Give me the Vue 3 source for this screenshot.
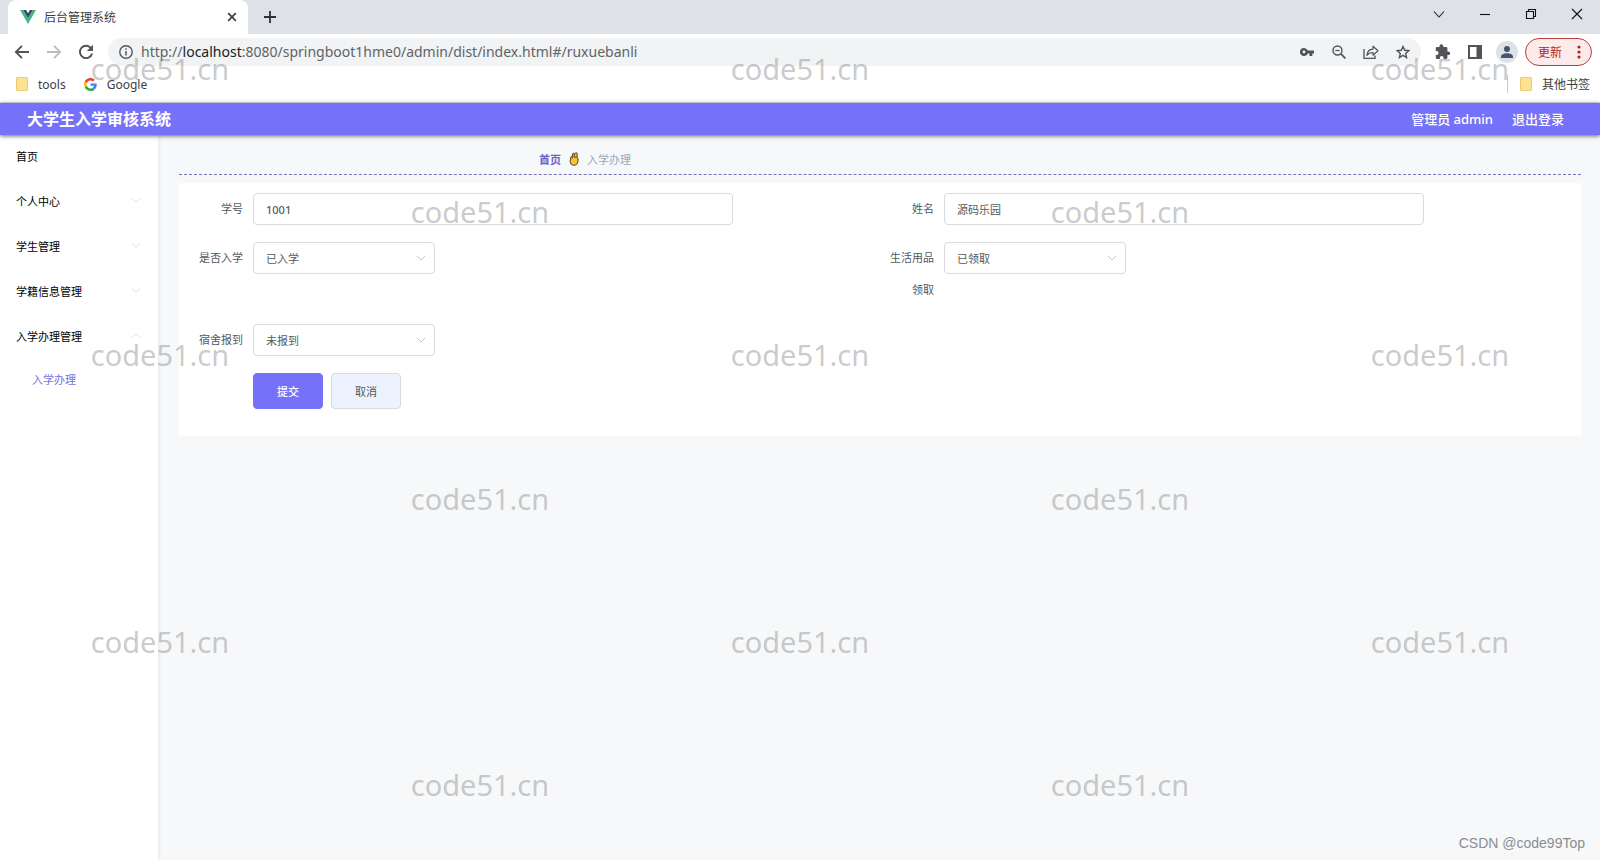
<script setup>
import { ref } from 'vue'

const menu = [
  { label: '首页' },
  { label: '个人中心', open: false },
  { label: '学生管理', open: false },
  { label: '学籍信息管理', open: false },
  { label: '入学办理管理', open: true },
]

const studentNo = ref('1001')
const studentName = ref('源码乐园')
const enrolled = ref('已入学')
const supplies = ref('已领取')
const dorm = ref('未报到')

const stampCells = Array.from({ length: 30 }, (_, i) => i % 2 === 0)
</script>

<template>
  <div class="window">
    <div class="tabstrip">
      <div class="tab">
        <svg class="vue-logo" viewBox="0 0 16 14" width="16" height="14">
          <path d="M0 0h3.2L8 8.3 12.8 0H16L8 13.9z" fill="#41b883" />
          <path d="M3.2 0h2.9L8 3.3 9.9 0h2.9L8 8.3z" fill="#35495e" />
        </svg>
        <span class="tab-title">后台管理系统</span>
        <button class="icon-btn close-tab" aria-label="关闭标签页">
          <svg viewBox="0 0 10 10" width="10" height="10"><path d="M1.2 1.2l7.6 7.6M8.8 1.2L1.2 8.8" stroke="#3c4043" stroke-width="1.7" /></svg>
        </button>
      </div>
      <button class="icon-btn new-tab" aria-label="新标签页">
        <svg viewBox="0 0 12 12" width="12" height="12"><path d="M6 0v12M0 6h12" stroke="#303134" stroke-width="1.8" /></svg>
      </button>
      <div class="window-controls">
        <button class="icon-btn" aria-label="搜索标签页"><svg viewBox="0 0 12 12" width="12" height="12"><path d="M1 3.5l5 5.5 5-5.5" fill="none" stroke="#222" stroke-width="1.1" /></svg></button>
        <button class="icon-btn" aria-label="最小化"><svg viewBox="0 0 12 12" width="12" height="12"><path d="M1 6.5h10" stroke="#111" stroke-width="1.1" /></svg></button>
        <button class="icon-btn" aria-label="还原"><svg viewBox="0 0 12 12" width="12" height="12"><path d="M1.5 3.5h7v7h-7zM3.5 3.500V1.500h7v7h-2" fill="none" stroke="#111" stroke-width="1.1" /></svg></button>
        <button class="icon-btn" aria-label="关闭"><svg viewBox="0 0 12 12" width="12" height="12"><path d="M1 1l10 10M11 1L1 11" stroke="#111" stroke-width="1.1" /></svg></button>
      </div>
    </div>

    <div class="toolbar">
      <button class="icon-btn" aria-label="后退"><svg viewBox="0 0 16 16" width="16" height="16"><path d="M15 8H2M8 1.800L1.800 8 8 14.200" fill="none" stroke="#505357" stroke-width="1.800" /></svg></button>
      <button class="icon-btn" aria-label="前进"><svg viewBox="0 0 16 16" width="16" height="16"><path d="M1 8h13M8 1.800L14.200 8 8 14.200" fill="none" stroke="#babcbe" stroke-width="1.800" /></svg></button>
      <button class="icon-btn reload" aria-label="重新加载"><svg viewBox="0 0 16 16" width="16" height="16"><path d="M13.300 4.500A6.200 6.200 0 1 0 14.100 9.500" fill="none" stroke="#505357" stroke-width="1.900" /><path d="M15 0.800v6.200H8.800z" fill="#505357" /></svg></button>
      <div class="omnibox">
        <svg class="info" viewBox="0 0 14 14" width="14" height="14"><circle cx="7" cy="7" r="6.200" fill="none" stroke="#55585c" stroke-width="1.400" /><path d="M7 6v4.500M7 3.200v1.600" stroke="#55585c" stroke-width="1.500" /></svg>
        <span class="url">http://<b>localhost</b>:8080/springboot1hme0/admin/dist/index.html#/ruxuebanli</span>
        <button class="icon-btn" aria-label="密码"><svg viewBox="0 0 14 14" width="14" height="14"><path fill-rule="evenodd" d="M4 3a4 4 0 1 0 3.700 5.400H9.500V11h2.800V8.400H14V5.600H7.700A4 4 0 0 0 4 3zm0 2.600a1.400 1.400 0 1 1 0 2.800 1.400 1.400 0 0 1 0-2.800z" fill="#505357" /></svg></button>
        <button class="icon-btn" aria-label="缩放"><svg viewBox="0 0 14 14" width="14" height="14"><circle cx="5.500" cy="5.500" r="4.500" fill="none" stroke="#505357" stroke-width="1.400" /><path d="M8.900 8.900l4.500 4.500" stroke="#505357" stroke-width="1.800" /><path d="M3.300 5.500h4.400" stroke="#505357" stroke-width="1.200" /></svg></button>
        <button class="icon-btn" aria-label="分享"><svg viewBox="0 0 16 14" width="16" height="14"><path d="M1 4v9.300h11V10.500" fill="none" stroke="#505357" stroke-width="1.300" /><path d="M3.800 10.300C4.400 6 6.700 4.300 10 4.100V1.200l5 4.500-5 4.500V7.500C7.300 7.500 5.300 8.300 3.800 10.300z" fill="none" stroke="#505357" stroke-width="1.200" stroke-linejoin="round" /></svg></button>
        <button class="icon-btn" aria-label="收藏"><svg viewBox="0 0 14 14" width="14" height="14"><path d="M7 1.500l1.700 3.800 4.100.4-3.100 2.700.9 4.100L7 10.400l-3.600 2.100.9-4.100L1.200 5.700l4.100-.4z" fill="none" stroke="#505357" stroke-width="1.400" /></svg></button>
      </div>
      <button class="icon-btn ext" aria-label="扩展程序"><svg viewBox="0 0 16 16" width="16" height="16"><path d="M13.300 7.400h-.9V4.300c0-.7-.6-1.300-1.300-1.300H8.300V2.200a1.900 1.900 0 0 0-3.800 0V3H2.100C1.400 3 .8 3.600.8 4.300v2.600h.8a2 2 0 0 1 0 4H.8v2.700c0 .7.600 1.300 1.300 1.300h2.700V14a1.900 1.900 0 0 1 3.800 0v.9h2.500c.7 0 1.300-.6 1.300-1.300v-2.500h.9a1.850 1.850 0 0 0 0-3.700z" fill="#505357" /></svg></button>
      <button class="icon-btn side" aria-label="侧边栏"><svg viewBox="0 0 14 14" width="14" height="14"><path fill-rule="evenodd" d="M0 0h14v14H0zM2 2v10h6.500V2z" fill="#505357" /></svg></button>
      <button class="icon-btn avatar" aria-label="用户"><svg viewBox="0 0 14 14" width="14" height="14"><circle cx="7" cy="4" r="3" fill="#44546b" /><path d="M1 13v-1.500C1 9.400 4.500 8.200 7 8.200s6 1.200 6 3.300V13z" fill="#44546b" /></svg></button>
      <button class="update">更新<svg viewBox="0 0 4 14" width="4" height="14"><circle cx="2" cy="2" r="1.600" fill="#b3261e" /><circle cx="2" cy="7" r="1.600" fill="#b3261e" /><circle cx="2" cy="12" r="1.600" fill="#b3261e" /></svg></button>
    </div>

    <div class="bookmarks">
      <a href="#tools" class="bookmark"><i class="folder"></i>tools</a>
      <a href="#google" class="bookmark">
        <svg viewBox="0 0 48 48" width="13" height="13"><path fill="#ea4335" d="M24 9.500c3.500 0 6.700 1.200 9.200 3.600l6.900-6.900C35.900 2.400 30.500 0 24 0 14.600 0 6.500 5.400 2.600 13.200l8 6.200C12.400 13.700 17.700 9.500 24 9.500z" /><path fill="#4285f4" d="M47 24.500c0-1.600-.2-3.100-.4-4.500H24v9h12.900c-.6 3-2.200 5.500-4.800 7.200l7.700 6C44.400 38 47 31.800 47 24.500z" /><path fill="#fbbc05" d="M10.500 28.600a14.500 14.500 0 0 1 0-9.200l-8-6.200a24 24 0 0 0 0 21.600z" /><path fill="#34a853" d="M24 48c6.500 0 11.900-2.100 15.900-5.800l-7.700-6c-2.200 1.500-4.900 2.300-8.200 2.300-6.300 0-11.600-4.200-13.500-9.900l-8 6.200C6.500 42.600 14.600 48 24 48z" /></svg>
        Google
      </a>
      <a href="#other" class="bookmark other"><i class="folder"></i>其他书签</a>
    </div>

    <header class="app-header">
      <h1>大学生入学审核系统</h1>
      <span class="who">管理员 admin</span>
      <a href="#logout" class="logout">退出登录</a>
    </header>

    <div class="app-body">
      <nav class="sidebar">
        <button v-for="item in menu" :key="item.label" class="menu-item">
          {{ item.label }}
          <svg v-if="item.open !== undefined" viewBox="0 0 10 10" width="10" height="10">
            <path :d="item.open ? 'M1 6.500l4-4 4 4' : 'M1 2.500l4 4 4-4'" fill="none" stroke="#dcdde0" stroke-width="1" />
          </svg>
        </button>
        <a href="#/ruxuebanli" class="submenu-item">入学办理</a>
      </nav>

      <main class="content">
        <div class="breadcrumb">
          <a href="#/">首页</a>
          <svg viewBox="0 0 10 14" width="10" height="14">
            <path d="M1.500 6.500C1.300 5 2.300 4.300 3.200 4.700L3.600 2.200C3.800 1 5 .8 5.200 2L6.600 1C7.600.4 8.500 1.200 8.200 2.300L7.900 5C9 6 9.300 7.500 8.900 9.500 8.500 12 7 13.200 4.900 13.200 2.500 13.200 1.200 11.500 1.200 9.500z" fill="#f7c52d" stroke="#4b3820" stroke-width="1" />
            <path d="M5.200 2v3M3.200 4.700v2M5.100 5l2.500.3" fill="none" stroke="#3f2e14" stroke-width=".9" />
          </svg>
          <span>入学办理</span>
        </div>

        <form class="card" @submit.prevent>
          <div class="field">
            <label for="no">学号</label>
            <input id="no" v-model="studentNo" class="number" type="text" />
          </div>
          <div class="field">
            <label for="name">姓名</label>
            <input id="name" v-model="studentName" type="text" />
          </div>
          <div class="field">
            <label for="enrolled">是否入学</label>
            <div class="select">
              <select id="enrolled" v-model="enrolled"><option>已入学</option><option>未入学</option></select>
              <svg viewBox="0 0 10 10" width="10" height="10"><path d="M1 3l4 4 4-4" fill="none" stroke="#c0c4cc" /></svg>
            </div>
          </div>
          <div class="field">
            <label for="supplies">生活用品领取</label>
            <div class="select">
              <select id="supplies" v-model="supplies"><option>已领取</option><option>未领取</option></select>
              <svg viewBox="0 0 10 10" width="10" height="10"><path d="M1 3l4 4 4-4" fill="none" stroke="#c0c4cc" /></svg>
            </div>
          </div>
          <div class="field">
            <label for="dorm">宿舍报到</label>
            <div class="select">
              <select id="dorm" v-model="dorm"><option>未报到</option><option>已报到</option></select>
              <svg viewBox="0 0 10 10" width="10" height="10"><path d="M1 3l4 4 4-4" fill="none" stroke="#c0c4cc" /></svg>
            </div>
          </div>
          <div class="actions">
            <button type="submit" class="primary">提交</button>
            <button type="button">取消</button>
          </div>
        </form>
      </main>
    </div>

    <div class="stamps" aria-hidden="true">
      <span v-for="(shown, i) in stampCells" :key="i">{{ shown ? 'code51.cn' : '' }}</span>
    </div>
    <div class="credit">CSDN @code99Top</div>
  </div>
</template>

<style>
body {
  margin: 0;
}
</style>

<style scoped>
.window {
  position: relative;
  display: flex;
  flex-direction: column;
  min-height: 100vh;
  overflow: hidden;
  background: #fff;
  color: #3c4043;
  font-family: "Noto Sans", "Noto Sans CJK SC", sans-serif;
  font-size: 12px;
}
.window * {
  box-sizing: border-box;
}
button,
input,
select {
  font: inherit;
  color: inherit;
}
a {
  color: inherit;
  text-decoration: none;
}
svg {
  flex: none;
  display: block;
}
.icon-btn {
  display: flex;
  align-items: center;
  justify-content: center;
  flex: none;
  padding: 0;
  border: 0;
  background: none;
}

.tabstrip {
  display: flex;
  height: 34px;
  padding-left: 8px;
  background: #dee1e6;
}
.tab {
  display: flex;
  align-items: center;
  width: 240px;
  padding: 0 11px 0 12px;
  border-radius: 8px 8px 0 0;
  background: #fff;
}
.tab-title {
  flex: 1;
  margin-left: 8px;
}
.new-tab {
  width: 44px;
}
.window-controls {
  display: flex;
  align-items: center;
  height: 28px;
  margin-left: auto;
}
.window-controls .icon-btn {
  width: 46px;
  height: 28px;
}

.toolbar {
  display: flex;
  align-items: center;
  height: 36px;
  padding: 0 8px 0 14px;
}
.toolbar > .icon-btn {
  width: 16px;
  margin-right: 16px;
}
.toolbar > .reload {
  margin-right: 14px;
}
.omnibox {
  display: flex;
  flex: 1;
  align-items: center;
  gap: 16px;
  height: 28px;
  padding: 0 10px 0 11px;
  border-radius: 14px;
  background: #f1f3f4;
}
.omnibox .icon-btn {
  width: 16px;
}
.info {
  margin-right: -8px;
}
.url {
  flex: 1;
  color: #5f6368;
  font-size: 14px;
  line-height: 18px;
}
.url b {
  color: #202124;
  font-weight: 400;
}
.toolbar > .ext {
  margin: 0 16px 0 14px;
}
.toolbar > .avatar {
  width: 22px;
  height: 22px;
  margin-right: 7px;
  border-radius: 11px;
  background: #dee1e6;
}
.toolbar > .side {
  margin-right: 13px;
}
.update {
  display: flex;
  align-items: center;
  justify-content: space-between;
  width: 67px;
  height: 28px;
  padding: 0 10px 0 12px;
  border: 1px solid #b3403a;
  border-radius: 14px;
  background: #fcebea;
  color: #b3261e;
}

.bookmarks {
  display: flex;
  align-items: center;
  gap: 18px;
  height: 33px;
  padding: 0 10px 4px 16px;
  border-bottom: 1px solid #e4e3f5;
}
.bookmark {
  display: flex;
  align-items: center;
  gap: 10px;
}
.folder {
  width: 12px;
  height: 14px;
  border: 1px solid #e9cc6b;
  border-radius: 1px;
  background: #fde293;
}
.other {
  height: 18px;
  margin-left: auto;
  padding-left: 12px;
  border-left: 1px solid #c8cacd;
}

.app-header {
  position: relative;
  display: flex;
  align-items: center;
  height: 32px;
  padding: 0 36px 2px 27px;
  background: #7571f9;
  box-shadow: 0 1px 4px rgba(0, 0, 0, 0.6);
  color: #fff;
  font-size: 13px;
  font-weight: 500;
}
.app-header h1 {
  margin: 0;
  font-size: 16px;
  font-weight: 700;
}
.who {
  margin-left: auto;
}
.logout {
  margin-left: 19px;
}

.app-body {
  display: flex;
  flex: 1;
  font-size: 11px;
}
.sidebar {
  position: relative;
  width: 158px;
  background: #fff;
  box-shadow: 0 0 4px rgba(0, 0, 0, 0.12);
}
.app-header {
  z-index: 1;
}
.menu-item {
  display: flex;
  align-items: center;
  justify-content: space-between;
  width: 100%;
  height: 45px;
  padding: 0 17px 3px 16px;
  border: 0;
  background: none;
  color: #000;
}
.submenu-item {
  display: flex;
  align-items: center;
  height: 40px;
  padding: 0 0 3px 32px;
  color: #7571d9;
}
.content {
  flex: 1;
  padding: 0 19px 0 21px;
  background: #f6f8fa;
}
.breadcrumb {
  display: flex;
  align-items: center;
  gap: 8px;
  height: 40px;
  margin-bottom: 8px;
  padding: 8px 0 0 360px;
  border-bottom: 1px dashed #7772b5;
  color: #97a8be;
}
.breadcrumb a {
  color: #6f63cf;
  font-weight: 700;
}
.card {
  display: grid;
  grid-template-columns: 1fr 1fr;
  padding: 10px 10px 27px;
  background: #fff;
  color: #55585e;
}
.field {
  display: flex;
  align-items: flex-start;
  margin-bottom: 17px;
}
.field label {
  flex: none;
  width: 64px;
  padding-right: 10px;
  line-height: 32px;
  text-align: right;
}
.field:nth-child(4) {
  margin-bottom: 18px;
}
.field input,
.field select {
  width: 480px;
  height: 32px;
  padding: 0 12px;
  border: 1px solid #d9dbe0;
  border-radius: 4px;
  outline: 0;
  background: #fff;
}
.field .number {
  font-weight: 500;
}
.select {
  position: relative;
  width: 182px;
}
.field select {
  display: block;
  width: 100%;
  appearance: none;
}
.select svg {
  position: absolute;
  top: 11px;
  right: 9px;
}
.actions {
  display: flex;
  grid-column: 1 / -1;
  gap: 8px;
  padding-left: 64px;
}
.actions button {
  width: 70px;
  height: 36px;
  border: 1px solid #d6dbe3;
  border-radius: 4px;
  background: #ecf3ff;
}
.actions .primary {
  border-color: #7571f9;
  background: #7571f9;
  color: #fff;
  font-weight: 500;
}

.stamps {
  position: absolute;
  inset: 0;
  z-index: 2;
  display: grid;
  grid-template-columns: repeat(5, 1fr);
  grid-template-rows: repeat(6, 1fr);
  place-items: center;
  color: rgba(120, 120, 120, 0.4);
  font-size: 29px;
  line-height: 36px;
  pointer-events: none;
}
.stamps span {
  padding-bottom: 6px;
}
.credit {
  position: absolute;
  right: 15px;
  bottom: 9px;
  color: #8b8d90;
  font-family: "Liberation Sans", Arial, sans-serif;
  font-size: 14px;
}
</style>
